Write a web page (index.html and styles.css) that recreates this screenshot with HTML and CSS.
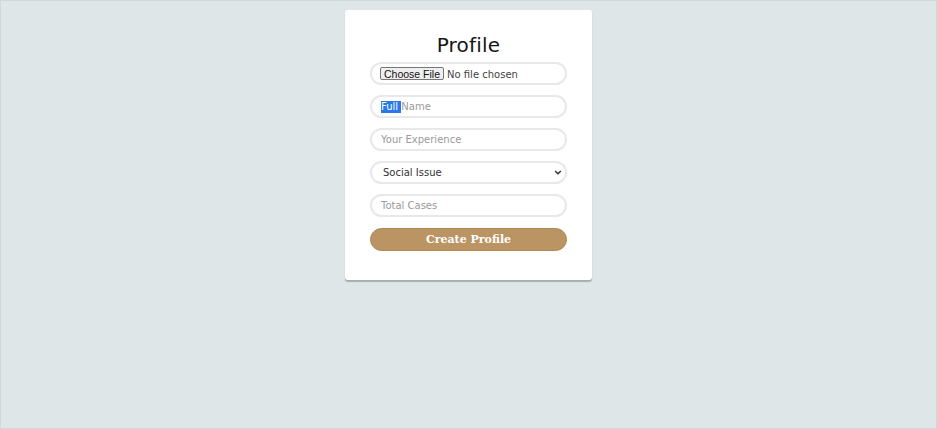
FILE: index.html
```html
<!DOCTYPE html>
<html>
<head>
<meta charset="utf-8">
<link rel="stylesheet" href="styles.css">
</head>
<body>
<div class="page">
  <form class="card">
    <h1 class="title">Profile</h1>
    <div class="field file-field"><input type="file" class="file"></div>
    <div class="field faux"><span class="sel">Full&nbsp;</span><span class="ph">Name</span></div>
    <input class="field" type="text" placeholder="Your Experience">
    <div class="select-wrap">
      <select class="field select">
        <option>Social Issue</option>
      </select>
      <svg class="chev" width="8" height="5" viewBox="0 0 8 5"><path d="M1.2 1 L4 3.8 L6.8 1" fill="none" stroke="#333" stroke-width="1.5"/></svg>
    </div>
    <input class="field" type="text" placeholder="Total Cases">
    <button type="button" class="submit">Create Profile</button>
  </form>
</div>
</body>
</html>
```
FILE: styles.css
```css
html, body {
  margin: 0;
  padding: 0;
}
body {
  background: #dfe6e7;
  font-family: "DejaVu Sans", Verdana, sans-serif;
}
.page {
  box-sizing: border-box;
  height: 429px;
  border: 1px solid #d0d8d9;
  padding-top: 9px;
}
.card {
  box-sizing: border-box;
  width: 247px;
  height: 270px;
  margin: 0 auto;
  background: #fff;
  border-radius: 3px;
  box-shadow: 0 2px 1px rgba(0,0,0,0.25);
  padding: 23px 25px 30px;
  display: flex;
  flex-direction: column;
  gap: 10px;
}
.title {
  margin: 0 0 -5px;
  font-weight: normal;
  font-size: 20px;
  line-height: 24px;
  text-align: center;
  color: #151515;
  letter-spacing: 0.2px;
}
.field {
  box-sizing: border-box;
  width: 197px;
  height: 23px;
  flex: none;
  border: 2px solid #e8e8e8;
  border-radius: 12px;
  padding: 0 9px;
  font-family: "DejaVu Sans", Verdana, sans-serif;
  font-size: 10px;
  color: #444;
  background: #fff;
  outline: none;
  margin: 0;
}
.field::placeholder {
  color: #9a9a9a;
}
.faux {
  display: flex;
  align-items: center;
}
.sel {
  background: #2a78e8;
  color: #fff;
  line-height: 12px;
}
.ph {
  color: #9a9a9a;
}
.file-field {
  display: flex;
  align-items: center;
  padding-left: 8px;
}
.file {
  font-family: "DejaVu Sans", Verdana, sans-serif;
  font-size: 10px;
  color: #444;
}
.file::file-selector-button {
  font-family: "Liberation Sans", Arial, sans-serif;
  font-size: 10.5px;
  padding: 0 3px;
  margin-right: 3px;
  border: 1px solid #767676;
  border-radius: 2px;
  background: #efefef;
  color: #111;
  height: 13px;
}
.select-wrap {
  position: relative;
  width: 197px;
  height: 23px;
  flex: none;
}
.select {
  display: block;
  appearance: none;
  -webkit-appearance: none;
  padding-left: 11px;
  color: #333;
}
.chev {
  position: absolute;
  right: 5px;
  top: 9px;
  pointer-events: none;
}
.submit {
  width: 197px;
  height: 23px;
  flex: none;
  margin-top: 1px;
  border: 1px solid #b08858;
  border-radius: 12px;
  background: #bb9464;
  color: #fff;
  font-family: "DejaVu Serif", Georgia, serif;
  font-weight: bold;
  font-size: 11px;
  letter-spacing: 0;
  padding: 0;
}
```
